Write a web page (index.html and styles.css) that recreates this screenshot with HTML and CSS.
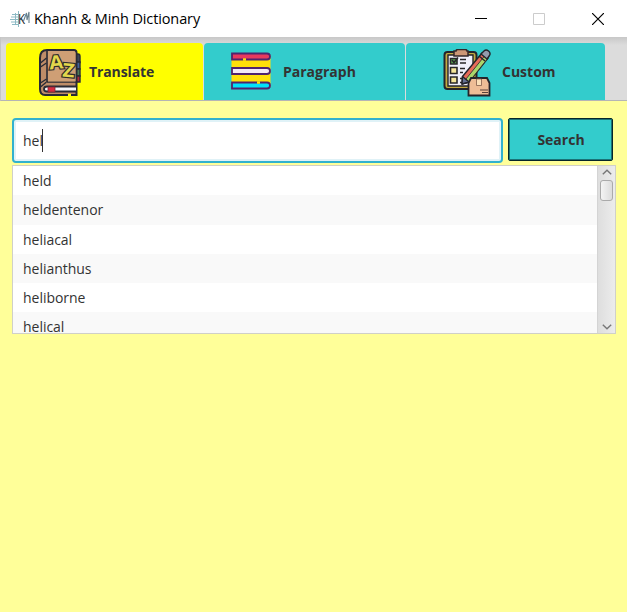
FILE: index.html
```html
<!DOCTYPE html>
<html lang="en">
<head>
<meta charset="utf-8">
<title>Khanh &amp; Minh Dictionary</title>
<link rel="stylesheet" href="styles.css">
</head>
<body>
<div class="window">
  <header class="titlebar">
    <svg class="logo" width="20" height="18" viewBox="0 0 20 18">
      <path d="M2 4.500h6M1 7h7M0 9.500h8M1 12h7M2 14.500h6M8.500 1v16M5.500 3v12" fill="none" stroke="#8dbac5" stroke-width="1"/>
      <text class="logo-k" x="8" y="14" textLength="7" lengthAdjust="spacingAndGlyphs">K</text>
      <path d="M13.500 11L16.500 3l.5 7L19 2v11" fill="none" stroke="#68828e" stroke-width="1.100"/>
    </svg>
    <span class="title">Khanh &amp; Minh Dictionary</span>
    <div class="controls">
      <svg width="12" height="12" viewBox="0 0 12 12"><path d="M0 5.500h12" stroke="#000"/></svg>
      <svg width="12" height="12" viewBox="0 0 12 12"><path d="M.5.5h11v11H.5z" fill="none" stroke="#ccc"/></svg>
      <svg width="12" height="12" viewBox="0 0 12 12"><path d="M0 0l12 12M12 0L0 12" stroke="#000" stroke-width="1.200"/></svg>
    </div>
  </header>

  <nav class="tabs">
    <div class="tab tab-translate active">
      <svg width="43" height="48" viewBox="0 0 43 48">
        <g stroke="#292b35" stroke-width="1.400">
          <path d="M36 5h3q2 0 2 2.500v6h-5z" fill="#3d4657"/>
          <path d="M36 13h5v7h-5z" fill="#44639b"/>
          <path d="M36 20h5v7h-5z" fill="#4d7a58"/>
          <path d="M36 27h5v6h-5z" fill="#b52a3a"/>
        </g>
        <path d="M8 1h27q2.500 0 2.500 2.500V46H6q-5 0-5-6V9q0-8 7-8z" fill="#bf8d68" stroke="#292b35" stroke-width="2"/>
        <path d="M8 2v31M8 33h30" fill="none" stroke="#292b35" stroke-width="1.600"/>
        <path d="M9 2h25q2.500 0 2.500 2v28.500H9z" fill="#cf9f75"/>
        <path d="M1.500 14l6-5M1.500 18l6-4M1.500 34l6-4M1.500 38l6-5" stroke="#292b35" stroke-width="1.400"/>
        <path d="M37 37.500H8q-3 0-3 2.500t3 2.500h29" fill="#f4f5fa" stroke="#292b35" stroke-width="1.800"/>
        <path d="M9 38h7v5H9z" fill="#d62d42" stroke="#7e2634" stroke-width=".8"/>
        <text class="letter" x="10" y="20" textLength="14" lengthAdjust="spacingAndGlyphs" transform="rotate(-5 17 13)">A</text>
        <text class="letter" x="23.500" y="28" textLength="12" lengthAdjust="spacingAndGlyphs" transform="rotate(5 29 21)">Z</text>
        <path d="M29 46h3" stroke="#ff0" stroke-width="2.500"/>
      </svg>
      <span class="label">Translate</span>
    </div>
    <div class="tab tab-paragraph">
      <svg width="40" height="38" viewBox="0 0 40 38">
        <path d="M.5 3h39v32H.5z" fill="#ffe00a"/>
        <g stroke="#50246e" stroke-width="1.800">
          <path d="M1 1.500h35q3 0 3 3t-3 3H1z" fill="#e8395e"/>
          <path d="M1 16h35q3 0 3 3t-3 3H1z" fill="#f4eaf6"/>
          <path d="M1 30.500h35q3 0 3 3t-3 3H1z" fill="#00e2fb"/>
        </g>
        <path d="M12 7.500h3M26 30.500h3" stroke="#ffe00a" stroke-width="2.500"/>
      </svg>
      <span class="label">Paragraph</span>
    </div>
    <div class="tab tab-custom">
      <svg width="48" height="48" viewBox="0 0 48 48">
        <rect x="1.500" y="3" width="32" height="37" rx="3" fill="#c3ab42" stroke="#24242b" stroke-width="2"/>
        <path d="M5 6h25v31H5z" fill="#f0f0fb" stroke="#24242b" stroke-width="1.400"/>
        <path d="M11 2h2q0-1.500 2-1.500h7Q24 .5 24 2h1v5H11z" fill="#cc9776" stroke="#33272a" stroke-width="1.500"/>
        <g stroke="#28272a" stroke-width="1.600">
          <path d="M7.500 9.500H14V15H7.500z" fill="#5aa451"/>
          <path d="M7.500 18.500H14v6H7.500z" fill="#f5e69b"/>
          <path d="M7.500 28H14v6H7.500z" fill="#f5e69b"/>
          <path d="M9 11l2 2.500 4-5" fill="none"/>
          <path d="M17 10.500h6M17 14h6M17 19.500h5M17 23.500h3M17 29.500h7M17 33.500h7" fill="none"/>
        </g>
        <g stroke="#24242b" stroke-width="1.400" stroke-linejoin="round">
          <path d="M19.500 27.500L39 4l6 5-19 24-7 2z" fill="#e66a59"/>
          <path d="M23 30L41.500 7l3.500 2-19 24z" fill="#abd46a" stroke-width=".8"/>
          <path d="M19.500 27.500l6.500 5.500-7 2z" fill="#657294"/>
          <path d="M38 5l3-3q2-2 4.500 0t1 4.500L44 10z" fill="#949cad"/>
          <path d="M36 7l6 5" fill="none"/>
        </g>
        <path d="M28 29h16l2.500 5v12.500h-21V34z" fill="#eebd96" stroke="#24242b" stroke-width="1.800"/>
        <path d="M37 41h8M39 43.500h6" fill="none" stroke="#57423c" stroke-width="1.200"/>
        <path d="M33.500 30h5v6.500h-5z" fill="#fbdfb8" stroke="#835e4b" stroke-width=".8"/>
      </svg>
      <span class="label">Custom</span>
    </div>
  </nav>

  <main class="content">
    <div class="search-row">
      <div class="field"><span class="entry">hel</span><span class="caret"></span></div>
      <button class="search"><span>Search</span></button>
    </div>
    <div class="list">
      <ul class="words">
        <li>held</li>
        <li>heldentenor</li>
        <li>heliacal</li>
        <li>helianthus</li>
        <li>heliborne</li>
        <li>helical</li>
      </ul>
      <div class="scrollbar">
        <svg width="10" height="6" viewBox="0 0 10 6"><path d="M.8 5.200L5 1.200l4.200 4" fill="none" stroke="#777" stroke-width="1.400"/></svg>
        <div class="thumb"></div>
        <svg class="down" width="10" height="6" viewBox="0 0 10 6"><path d="M.8.8L5 4.800 9.200.8" fill="none" stroke="#777" stroke-width="1.400"/></svg>
      </div>
    </div>
  </main>
</div>
</body>
</html>
```
FILE: styles.css
```css
* { box-sizing: border-box; }
body {
  margin: 0;
  font-family: "Open Sans", "Noto Sans", sans-serif;
  font-size: 14px;
  color: #333;
}
.window {
  height: 612px;
  display: flex;
  flex-direction: column;
  background: #ff9;
  overflow: hidden;
}
.titlebar {
  height: 37px;
  flex: none;
  display: flex;
  align-items: center;
  padding: 0 23px 0 10px;
  background: #fff;
}
.logo { overflow: visible; }
.logo-k { font: 14px "Open Sans", sans-serif; fill: #15222a; }
.title {
  margin-left: 4px;
  color: #000;
  font-size: 14.5px;
  letter-spacing: -0.12px;
  white-space: nowrap;
}
.controls {
  display: flex;
  gap: 46.5px;
  margin-left: auto;
}
.controls svg:nth-child(2) { margin: 0 .5px 0 -.5px; }
.tabs {
  height: 64px;
  flex: none;
  display: flex;
  gap: 1px;
  padding: 6px 0 0 4.5px;
  background: linear-gradient(#c8c8c8, #dcdcdc 8px);
  border-bottom: 1px solid #b5b5b5;
  border-left: 1px solid #c6c6c6;
}
.tab {
  display: flex;
  align-items: center;
  background: #3cc;
  border-radius: 4px 4px 0 0;
  font-weight: 700;
}
.tab svg { flex: none; }
.tab-translate { width: 197.5px; padding-left: 33.5px; letter-spacing: -0.1px; }
.tab-translate svg { margin-top: 2px; }
.tab-translate .label { margin-left: 7px; }
.tab-paragraph { width: 201px; padding-left: 27px; }
.tab-paragraph svg { margin-top: -2px; }
.tab-paragraph .label { margin-left: 12px; }
.tab-custom { width: 199px; padding-left: 37px; }
.tab-custom svg { margin-top: 3px; }
.tab-custom .label { margin-left: 11px; }
.tab.active { background: #ff0; }
.letter {
  font: 700 19px "Open Sans", sans-serif;
  fill: #e2d64c;
  stroke: #302e2a;
  stroke-width: 2.4px;
  paint-order: stroke;
}
.content { padding: 17px 11px 0 12px; }
.search-row { display: flex; gap: 5px; align-items: flex-start; }
.field {
  width: 491px;
  height: 45px;
  display: flex;
  align-items: center;
  padding-left: 9px;
  background: #fff;
  border: 2px solid #32b1ce;
  border-radius: 4px;
  box-shadow: inset 0 0 0 2px #e0f2f7;
}
.caret { width: 1px; height: 23px; margin-left: -1px; background: #333; }
.search {
  width: 105px;
  height: 43px;
  padding: 0 0 0 1px;
  font: inherit;
  font-weight: 700;
  color: #333;
  background: #3cc;
  border: 1px solid #06262a;
  box-shadow: inset 0 0 0 1px #1a7377;
  border-radius: 2px;
}
.list {
  width: 604px;
  height: 169px;
  margin-top: 2px;
  display: flex;
  border: 1px solid #d0d0c8;
  background: #fff;
  overflow: hidden;
}
.words { flex: 1; margin: 0; padding: 0; list-style: none; letter-spacing: -0.03px; }
.words li { height: 29.3px; padding-left: 10px; line-height: 29.3px; }
.words li:nth-child(even) { background: #f9f9f9; }
.scrollbar {
  width: 18px;
  display: flex;
  flex-direction: column;
  align-items: center;
  padding: 3px 0;
  border-left: 1px solid #d4d4d4;
  background: linear-gradient(90deg, #dedede, #ececec);
}
.thumb {
  width: 13px;
  height: 21px;
  margin-top: 5px;
  border: 1px solid #aaa;
  border-radius: 3px;
  background: linear-gradient(90deg, #f4f4f4, #dcdcdc);
}
.down { margin-top: auto; }
```
